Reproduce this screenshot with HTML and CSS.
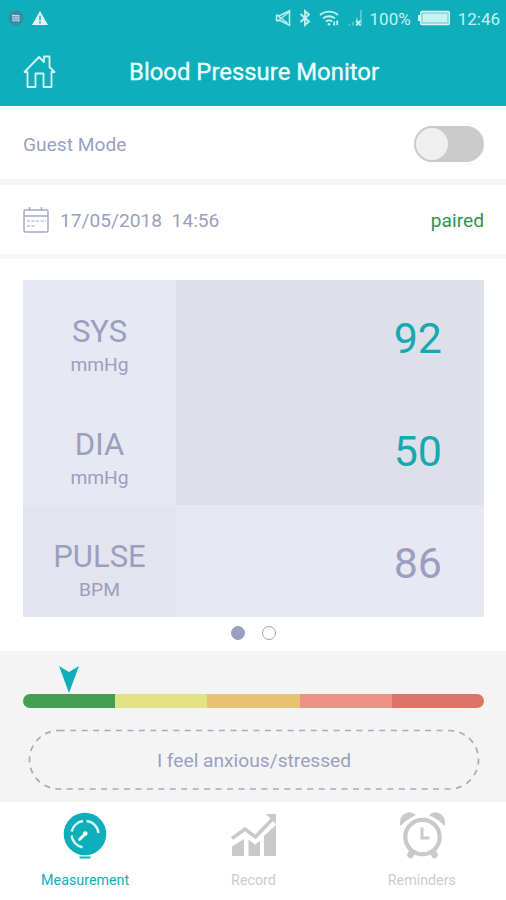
FILE: index.html
```html
<!DOCTYPE html>
<html lang="en">
<head>
  <meta charset="UTF-8">
  <meta name="viewport" content="width=device-width, initial-scale=1.0">
  <title>Blood Pressure Monitor</title>
  <link rel="stylesheet" href="styles.css">
</head>
<body>
  <div class="status-bar">
    <svg class="app-badge" width="16" height="16" viewBox="0 0 16 16">
      <circle cx="8" cy="8" r="7.5" fill="#3f87a3"/>
      <path d="M5 4.500v6.300h6.500M4 5.500h6.800v6M7 7h2v2H7z" fill="none" stroke="#b9e2ea" stroke-width="1.100"/>
    </svg>
    <svg class="warning" width="16" height="14" viewBox="0 0 16 14">
      <path d="M8 0l8 14H0z" fill="#e0f8fa"/>
      <path d="M8 4.500v4.800M8 10.600v1.800" stroke="#0eafba" stroke-width="1.500"/>
    </svg>
    <div class="status-right">
      <svg width="17" height="18" viewBox="0 0 17 18" fill="none" stroke="#b9edf0" stroke-width="1.500">
        <path d="M1.500 6.500v5h3.500l9.500 4.700V1.800L5 6.500zM1 5.500l11.500 8.500M2 12.500l12-9.500"/>
      </svg>
      <svg class="bluetooth" width="12" height="18" viewBox="0 0 12 18" fill="none" stroke="#c4f1f3" stroke-width="1.800">
        <path d="M1.500 5l8.500 7.500L6 16v-14l4 3.500L1.500 13"/>
      </svg>
      <svg class="wifi" width="21" height="18" viewBox="0 0 21 18" fill="none" stroke="#c4f1f3" stroke-width="1.800">
        <path d="M1 6a13.500 13.500 0 0 1 18 0M4 9.400a9.500 9.500 0 0 1 12 0M6.800 12.600a5.500 5.500 0 0 1 6.400 0"/>
        <circle cx="10" cy="15.300" r="1.300" fill="#c4f1f3" stroke="none"/>
        <path d="M15.200 16.500v-4M18.200 11.500v4.500" stroke-width="1.800"/>
      </svg>
      <svg class="signal" width="15" height="18" viewBox="0 0 15 18" fill="none">
        <path d="M1.500 15v1.500M5 13v3.500M9 8.500v8M13 1v15.500" stroke="#6bcfd5" stroke-width="1.500"/>
        <path d="M8 11.500l4.500 5M12.500 11.500L8 16.500" stroke="#d8f7f8" stroke-width="1.600"/>
      </svg>
      <span class="percent">100%</span>
      <svg class="battery" width="34" height="16" viewBox="0 0 34 16">
        <path d="M5 .8h26a2 2 0 0 1 2 2v10.400a2 2 0 0 1-2 2H5a2 2 0 0 1-2-2V11H1V5h2V2.800a2 2 0 0 1 2-2z" fill="#d9f8f9"/>
        <rect x="5" y="3" width="26" height="10" fill="#c8f2f4" stroke="#61c6cd" stroke-width="1"/>
      </svg>
      <span class="clock">12:46</span>
    </div>
  </div>

  <header class="header">
    <svg class="home" width="34" height="34" viewBox="0 0 34 34" fill="none" stroke="#d3f6f7" stroke-width="1.800" stroke-linejoin="round">
      <path d="M1.500 17L16 2l5 5V1.500h5.500V12L31.500 17H28.500V32H20.500V18.500H12.500V32H4.500V17z"/>
    </svg>
    <h1>Blood Pressure Monitor</h1>
  </header>

  <section class="row guest">
    <span>Guest Mode</span>
    <div class="toggle"></div>
  </section>

  <section class="row device">
    <svg class="calendar" width="26" height="27" viewBox="0 0 26 27" fill="none" stroke="#a6aac7" stroke-width="1.500">
      <rect x="1" y="3" width="24" height="22" rx="1.500"/>
      <path d="M1 9h24M6.500 0v4M18.500 0v4"/>
      <path d="M4 14h19M4 19h9" stroke-width="2" stroke-dasharray="3 1.500" opacity=".55"/>
    </svg>
    <span class="date">17/05/2018&nbsp; 14:56</span>
    <span class="paired">paired</span>
  </section>

  <main class="readings">
    <div class="reading">
      <div class="label"><span class="name">SYS</span><span class="unit">mmHg</span></div>
      <div class="value">92</div>
    </div>
    <div class="reading">
      <div class="label"><span class="name">DIA</span><span class="unit">mmHg</span></div>
      <div class="value">50</div>
    </div>
    <div class="reading pulse">
      <div class="label"><span class="name">PULSE</span><span class="unit">BPM</span></div>
      <div class="value">86</div>
    </div>
  </main>

  <div class="dots">
    <span class="dot active"></span>
    <span class="dot"></span>
  </div>

  <section class="level">
    <svg class="pointer" width="20" height="27" viewBox="0 0 20 27">
      <path d="M0 0l10 6 10-6-10 27z" fill="#0eafba"/>
    </svg>
    <div class="scale">
      <span class="optimal"></span>
      <span class="normal"></span>
      <span class="elevated"></span>
      <span class="high"></span>
      <span class="severe"></span>
    </div>
    <div class="mood">
      <svg class="mood-outline" width="452" height="62" viewBox="0 0 452 62">
        <rect x="1.500" y="1.500" width="449" height="58.500" rx="29.250" fill="none" stroke="#a6aaba" stroke-width="1.700" stroke-dasharray="6 5.450"/>
      </svg>
      <span>I feel anxious/stressed</span>
    </div>
  </section>

  <nav class="tabs">
    <a class="tab active">
      <svg width="46" height="48" viewBox="0 0 46 48">
        <circle cx="23" cy="22" r="21.300" fill="#0eafba"/>
        <path d="M17.500 45.500h11" stroke="#0eafba" stroke-width="2"/>
        <path d="M24.500 9a13.500 13.500 0 0 1 12 12M21 9A14 14 0 0 0 9.600 19.500M9.600 23.500A13.500 13.500 0 0 0 20.500 35.300" fill="none" stroke="#dcf7f8" stroke-width="2.400"/>
        <path d="M17.500 27.500l6-6" stroke="#fff" stroke-width="2.600" stroke-linecap="round"/>
        <circle cx="23.300" cy="21.500" r="2.300" fill="#fff"/>
      </svg>
      <span>Measurement</span>
    </a>
    <a class="tab">
      <svg width="46" height="48" viewBox="0 0 46 48" fill="#c9c9c9">
        <path d="M2 34.500L14 27v17H2zM18.500 27.500l6.500 5 5-3.500v15H18.500zM34 24L46 13v31H34z"/>
        <path d="M2 26.500L15 17l10.500 8L42 7.500" fill="none" stroke="#c9c9c9" stroke-width="3.500"/>
        <path d="M36 2h10v10z"/>
      </svg>
      <span>Record</span>
    </a>
    <a class="tab">
      <svg width="46" height="48" viewBox="0 0 46 48" fill="none" stroke="#c9c9c9">
        <circle cx="23.500" cy="25" r="17.200" stroke-width="4.200"/>
        <path d="M23 15.500v10.500h7.500" stroke-width="3"/>
        <path d="M12.500 41l-1 2M34.500 41l1 2" stroke-width="6.500" stroke-linecap="round"/>
        <path d="M2 12.500C1 4 9 -2 15.500 3Q8 6 2 12.500zM45 12.500C46 4 38 -2 31.500 3Q39 6 45 12.500z" fill="#c9c9c9" stroke-width="1.800" stroke-linejoin="round"/>
      </svg>
      <span>Reminders</span>
    </a>
  </nav>
</body>
</html>
```

FILE: styles.css
```css
* {
  margin: 0;
  padding: 0;
  box-sizing: border-box;
}
body {
  width: 506px;
  height: 900px;
  background: #fff;
  color: #9a9fc1;
  font-family: Roboto, sans-serif;
  font-size: 19.2px;
  overflow: hidden;
}
svg {
  display: block;
  flex-shrink: 0;
}
.status-bar {
  display: flex;
  align-items: center;
  height: 37px;
  padding: 0 6px 1px 8px;
  background: #0eafba;
}
.warning {
  margin: 0 0 1px 8px;
}
.status-right {
  display: flex;
  align-items: center;
  margin-left: auto;
  color: #c4f1f3;
  font-size: 17px;
}
.bluetooth {
  margin-left: 7px;
}
.wifi {
  margin-left: 8px;
}
.signal {
  margin-left: 8px;
}
.percent {
  margin: 2px 0 0 7px;
}
.battery {
  margin-left: 6px;
}
.clock {
  margin: 2px 0 0 7px;
}
.header {
  display: flex;
  align-items: center;
  height: 69px;
  padding: 0 23px;
  background: #0eafba;
}
.header h1 {
  margin-left: 72px;
  color: #edffff;
  font-size: 23.9px;
  font-weight: 400;
  -webkit-text-stroke: 0.3px #edffff;
}
.row {
  display: flex;
  align-items: center;
  padding: 0 22px 0 23px;
}
.guest {
  height: 79px;
  padding-top: 3px;
  border-bottom: 6px solid #f4f4f4;
}
.toggle {
  width: 70px;
  height: 36px;
  margin-left: auto;
  padding: 2px;
  border-radius: 18px;
  background: #cbcbcb;
}
.toggle::before {
  content: "";
  display: block;
  width: 32px;
  height: 32px;
  border-radius: 50%;
  background: #efefef;
}
.device {
  height: 74px;
  padding-top: 1px;
  border-bottom: 5px solid #f6f6f6;
}
.date {
  margin-left: 11px;
}
.paired {
  margin-left: auto;
  color: #2e944b;
}
.readings {
  margin: 21px 22px 0 23px;
}
.reading {
  display: grid;
  grid-template-columns: 153px 1fr;
  height: 112.5px;
}
.label {
  display: flex;
  flex-direction: column;
  align-items: center;
  padding-top: 34px;
  background: #e7e8f2;
}
.name {
  font-size: 31px;
  line-height: 36px;
}
.unit {
  margin-top: 3px;
  line-height: 24px;
}
.value {
  padding: 33px 42px 0 0;
  background: #dde0e9;
  color: #17a9b1;
  font-size: 43px;
  line-height: 50px;
  text-align: right;
}
.pulse {
  height: 112px;
}
.pulse .label {
  background: #e3e4ed;
}
.pulse .value {
  background: #e7e8f2;
  color: #9a9fc1;
}
.dots {
  display: flex;
  justify-content: center;
  gap: 17px;
  height: 34px;
  padding-top: 9px;
}
.dot {
  width: 14px;
  height: 14px;
  border: 1.5px solid #9a9fc1;
  border-radius: 50%;
}
.dot.active {
  background: #9a9fc1;
}
.level {
  height: 151px;
  padding: 15px 22px 0 23px;
  background: #f4f4f4;
}
.pointer {
  margin-left: 36px;
}
.scale {
  display: flex;
  height: 14px;
  margin-top: 1px;
  border-radius: 7px;
  overflow: hidden;
}
.scale span {
  flex: 1;
}
.optimal {
  background: #439f54;
}
.normal {
  background: #e2e386;
}
.elevated {
  background: #e8c271;
}
.high {
  background: #ed9287;
}
.severe {
  background: #dc7566;
}
.mood {
  display: grid;
  width: 452px;
  height: 62px;
  margin: 21px 0 0 5px;
  place-items: center;
}
.mood > * {
  grid-area: 1 / 1;
}
.tabs {
  display: grid;
  grid-template-columns: repeat(3, 1fr);
  height: 98px;
  padding: 10px 0 0 1px;
}
.tab {
  display: flex;
  flex-direction: column;
  align-items: center;
  gap: 11px;
  color: #cdcdcd;
  font-size: 14.3px;
  line-height: 18px;
}
.tab.active {
  color: #0eafba;
}
```
